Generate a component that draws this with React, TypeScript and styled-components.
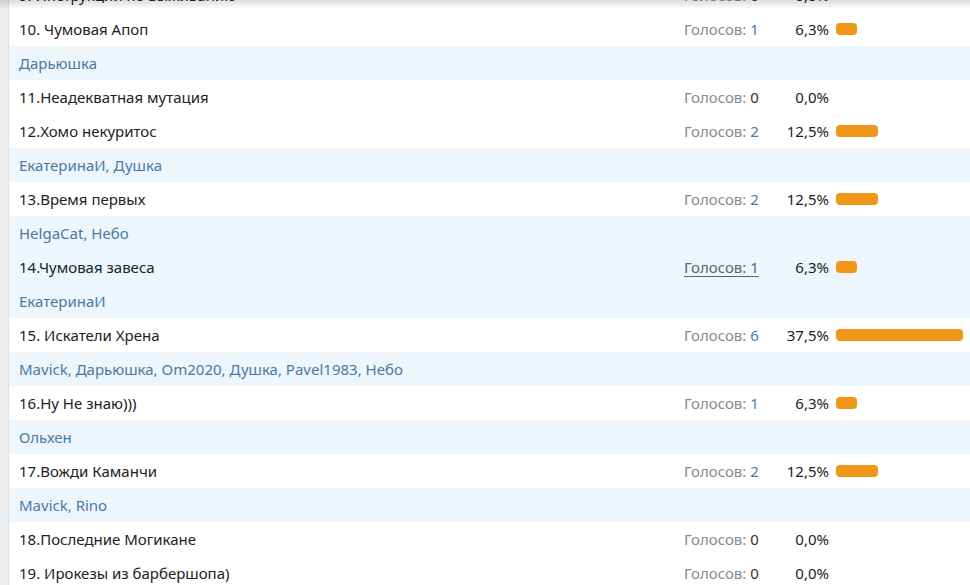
import React from "react";
import styled, { createGlobalStyle } from "styled-components";

const Global = createGlobalStyle`
  html, body { margin: 0; padding: 0; background: #fff; }
  body { font-family: "Noto Sans", "Open Sans", sans-serif; overflow: hidden; }
`;

const Page = styled.div`
  display: flex;
  min-height: 585px;
`;

const SideStrip = styled.div`
  width: 8px;
  flex: none;
  background: #eeeeee;
  border-right: 1px solid #e2e2e2;
`;

const List = styled.div`
  flex: 1;
  margin-top: -22px;
  display: flex;
  flex-direction: column;
`;

const TopShade = styled.div`
  position: fixed;
  left: 0;
  right: 0;
  top: 0;
  height: 9px;
  background: linear-gradient(rgba(0, 0, 0, 0.14), rgba(0, 0, 0, 0));
  pointer-events: none;
`;

const Row = styled.div<{ $hover?: boolean }>`
  display: grid;
  grid-template-columns: 675px 95px 50px 1fr;
  align-items: center;
  height: 34px;
  background: ${(p) => (p.$hover ? "#edf5fd" : "#fff")};
  font-size: 15px;
  color: #222;
`;

const Name = styled.div`
  padding-left: 10px;
  white-space: nowrap;
`;

const Votes = styled.div<{ $hover?: boolean }>`
  color: ${(p) => (p.$hover ? "#5a6670" : "#8a8a8a")};
  text-decoration: ${(p) => (p.$hover ? "underline" : "none")};
  text-underline-offset: 3px;
  white-space: nowrap;
`;

const Count = styled.span<{ $zero: boolean; $hover?: boolean }>`
  color: ${(p) => (p.$hover ? "#5a6670" : p.$zero ? "#333" : "#4a7ba5")};
`;

const Pct = styled.div`
  text-align: right;
  white-space: nowrap;
`;

const BarCell = styled.div`
  padding-left: 7px;
  display: flex;
  align-items: center;
`;

const Bar = styled.div`
  height: 12px;
  border-radius: 4px;
  background: #f0961a;
`;

const VoterRow = styled.div`
  height: 34px;
  display: flex;
  align-items: center;
  padding-left: 10px;
  background: #edf5fd;
  color: #4a7aa2;
  font-size: 15px;
  white-space: nowrap;
`;

type Item = { name: string; votes: number; pct: string; val: number; voters?: string; hover?: boolean };

const items: Item[] = [
  { name: "9. Инструкции по выживанию", votes: 0, pct: "0,0%", val: 0 },
  { name: "10. Чумовая Апоп", votes: 1, pct: "6,3%", val: 6.25, voters: "Дарьюшка" },
  { name: "11.Неадекватная мутация", votes: 0, pct: "0,0%", val: 0 },
  { name: "12.Хомо некуритос", votes: 2, pct: "12,5%", val: 12.5, voters: "ЕкатеринаИ, Душка" },
  { name: "13.Время первых", votes: 2, pct: "12,5%", val: 12.5, voters: "HelgaCat, Небо" },
  { name: "14.Чумовая завеса", votes: 1, pct: "6,3%", val: 6.25, voters: "ЕкатеринаИ", hover: true },
  { name: "15. Искатели Хрена", votes: 6, pct: "37,5%", val: 37.5, voters: "Mavick, Дарьюшка, Om2020, Душка, Pavel1983, Небо" },
  { name: "16.Ну Не знаю)))", votes: 1, pct: "6,3%", val: 6.25, voters: "Ольхен" },
  { name: "17.Вожди Каманчи", votes: 2, pct: "12,5%", val: 12.5, voters: "Mavick, Rino" },
  { name: "18.Последние Могикане", votes: 0, pct: "0,0%", val: 0 },
  { name: "19. Ирокезы из барбершопа)", votes: 0, pct: "0,0%", val: 0 },
];

const FULL = 339;

export default function App() {
  return (
    <>
      <Global />
      <Page>
        <SideStrip />
        <List>
          {items.map((it) => (
            <React.Fragment key={it.name}>
              <Row $hover={it.hover}>
                <Name>{it.name}</Name>
                <Votes $hover={it.hover}>
                  Голосов: <Count $zero={it.votes === 0} $hover={it.hover}>{it.votes}</Count>
                </Votes>
                <Pct>{it.pct}</Pct>
                <BarCell>
                  {it.val > 0 && <Bar style={{ width: Math.round((it.val / 100) * FULL) }} />}
                </BarCell>
              </Row>
              {it.voters && <VoterRow>{it.voters}</VoterRow>}
            </React.Fragment>
          ))}
        </List>
      </Page>
      <TopShade />
    </>
  );
}
